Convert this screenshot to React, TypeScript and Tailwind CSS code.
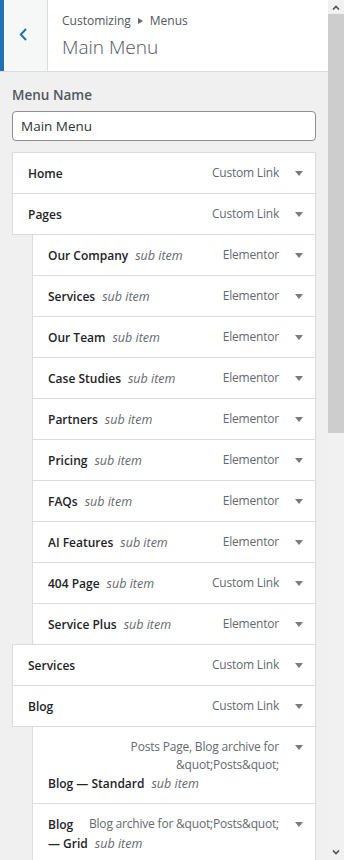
import React from "react";

type It = { title: string; type: string; sub?: boolean };

const items: It[] = [
  { title: "Home", type: "Custom Link" },
  { title: "Pages", type: "Custom Link" },
  { title: "Our Company", type: "Elementor", sub: true },
  { title: "Services", type: "Elementor", sub: true },
  { title: "Our Team", type: "Elementor", sub: true },
  { title: "Case Studies", type: "Elementor", sub: true },
  { title: "Partners", type: "Elementor", sub: true },
  { title: "Pricing", type: "Elementor", sub: true },
  { title: "FAQs", type: "Elementor", sub: true },
  { title: "AI Features", type: "Elementor", sub: true },
  { title: "404 Page", type: "Custom Link", sub: true },
  { title: "Service Plus", type: "Elementor", sub: true },
  { title: "Services", type: "Custom Link" },
  { title: "Blog", type: "Custom Link" },
  { title: "Blog — Standard", type: "Posts Page, Blog archive for &quot;Posts&quot;", sub: true },
  { title: "Blog — Grid", type: "Blog archive for &quot;Posts&quot;", sub: true },
];

function Tri() {
  return (
    <svg width="8" height="5" viewBox="0 0 8 5" className="block">
      <polygon points="0,0 8,0 4,5" fill="#787c82" />
    </svg>
  );
}

function Item({ it }: { it: It }) {
  return (
    <div
      className={`-mt-px flex border border-[#dcdcde] bg-white pt-[11px] pb-[10px] ${
        it.sub ? "ml-[20px]" : ""
      }`}
    >
      <div className="min-w-0 flex-1 pl-[15px] text-[12px] leading-[19px]">
        <span className="float-right ml-[4px] text-right leading-[18px] tracking-[-0.2px] text-[#646970]">
          {it.type}
        </span>
        <span className="font-semibold text-[#1d2327]">{it.title}</span>
        {it.sub && <span className="ml-[7px] text-[12.5px] italic text-[#646970]">sub item</span>}
      </div>
      <div className="w-[36px] shrink-0 pl-[16px] pt-[7px]">
        <Tri />
      </div>
    </div>
  );
}

export default function App() {
  return (
    <div className="flex h-[860px] w-[344px] overflow-hidden bg-[#f0f0f1] font-['Open_Sans',sans-serif]">
      <div className="flex w-[328px] shrink-0 flex-col">
        <div className="flex h-[72px] shrink-0 border-b border-[#dcdcde] bg-white">
          <div className="flex h-full w-[48px] shrink-0 items-center border-l-4 border-r border-l-[#2271b1] border-r-[#dcdcde] bg-[#f6f7f7] pb-[3px] pl-[15px]">
            <svg width="8" height="13" viewBox="0 0 8 13">
              <polyline points="7,1 1.8,6.5 7,12" fill="none" stroke="#2271b1" strokeWidth="2" />
            </svg>
          </div>
          <div className="pl-[14px] pt-[11px]">
            <div className="flex items-center text-[12px] leading-[20px] text-[#50575e]">
              <span>Customizing</span>
              <svg width="5" height="6" viewBox="0 0 5 6" className="mx-[7px]">
                <polygon points="0,0 5,3 0,6" fill="#646970" />
              </svg>
              <span>Menus</span>
            </div>
            <div className="mt-[3px] text-[19px] font-light leading-[27px] text-[#50575e]">Main Menu</div>
          </div>
        </div>
        <div className="px-[12px] pt-[13px]">
          <div className="text-[13.5px] font-semibold leading-[20px] text-[#50575e]">Menu Name</div>
          <div className="mt-[6px] flex h-[30px] items-center rounded-[4px] border border-[#8c8f94] bg-white pl-[8px] text-[13.5px] text-[#2c3338]">
            Main Menu
          </div>
          <div className="mt-[12px]">
            {items.map((it, i) => (
              <Item key={i} it={it} />
            ))}
          </div>
        </div>
      </div>
      <div className="relative flex h-full w-[16px] flex-col bg-[#f1f1f1]">
        <div className="flex h-[14px] items-center justify-center">
          <svg width="8" height="5" viewBox="0 0 8 5">
            <polyline points="1,4.5 4,1.5 7,4.5" fill="none" stroke="#505050" strokeWidth="1.6" />
          </svg>
        </div>
        <div className="h-[419px] bg-[#cdcdcd]" />
        <div className="flex-1" />
        <div className="flex h-[14px] items-center justify-center pb-[2px]">
          <svg width="8" height="5" viewBox="0 0 8 5">
            <polyline points="1,0.5 4,3.5 7,0.5" fill="none" stroke="#505050" strokeWidth="1.6" />
          </svg>
        </div>
      </div>
    </div>
  );
}
